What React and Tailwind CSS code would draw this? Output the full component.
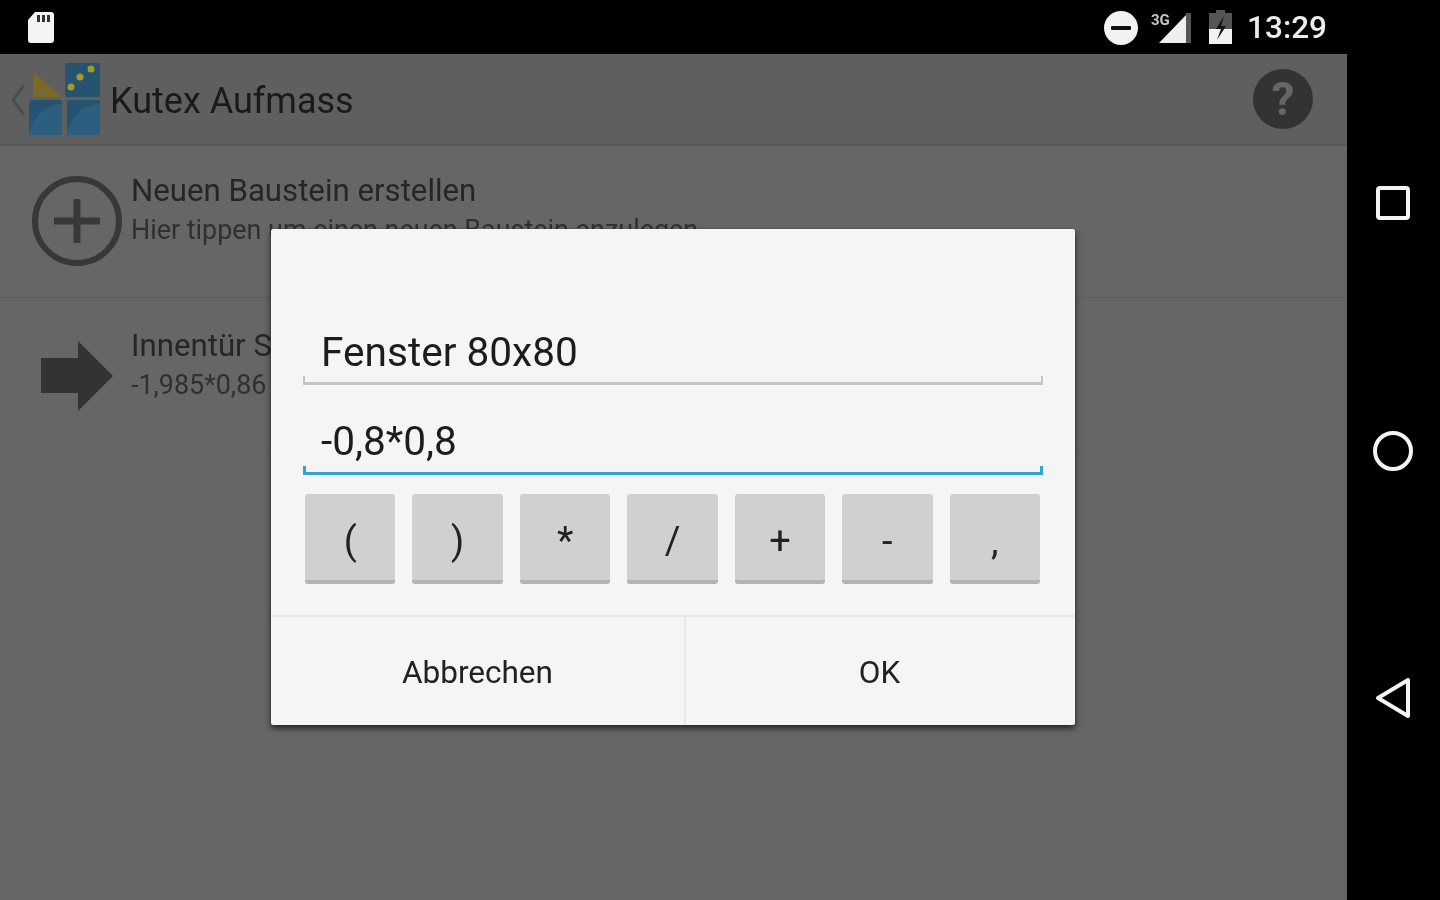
import React from 'react'

const font = { fontFamily: 'Roboto, sans-serif' }

const keys = ['(', ')', '*', '/', '+', '-', ',']

const StatusBar = () => (
  <div className="h-[54px] bg-black flex items-center shrink-0 text-white">
    <svg width="30" height="34" viewBox="0 0 30 34" className="ml-[26px] -mt-[1px]">
      <path d="M9 2h16a3 3 0 0 1 3 3v25a3 3 0 0 1-3 3H5a3 3 0 0 1-3-3V10z" fill="#f4f4f4" />
      <rect x="11" y="5" width="3" height="7" fill="#333" />
      <rect x="16" y="5" width="3" height="7" fill="#333" />
      <rect x="21" y="5" width="3" height="7" fill="#333" />
    </svg>
    <div className="flex items-center ml-auto mr-[113px] pt-[2px]">
      <svg width="36" height="36" viewBox="0 0 36 36">
        <circle cx="18" cy="18" r="17" fill="#f2f2f2" />
        <rect x="8" y="16" width="20" height="4" rx="1" fill="#111" />
      </svg>
      <svg width="44" height="36" viewBox="0 0 44 36" className="ml-[10px]">
        <path d="M10 33 L37 5 V33 Z" fill="#eeeeee" />
        <rect x="37" y="3" width="5" height="30" fill="#555" />
        <text x="2" y="15" fontSize="15" fontWeight="700" fill="#c8c8c8" style={font}>3G</text>
      </svg>
      <svg width="26" height="36" viewBox="0 0 26 36" className="ml-[15px]">
        <path d="M8 0h9v3h7v16H1V3h7z" fill="#555" />
        <path d="M1 19h23v15H1z" fill="#f2f2f2" />
        <path d="M16 6 L8 19 h5 l-4 11 L18 16 h-5 z" fill="#111" />
      </svg>
      <span className="ml-[13px] text-[31.5px] font-medium leading-none text-[#ececec]" style={font}>13:29</span>
    </div>
  </div>
)

const Header = () => (
  <div className="h-[92px] bg-[#5f5f5f] border-b-2 border-[#565656] flex items-center shrink-0">
    <svg width="90" height="74" viewBox="0 0 90 74" className="ml-[10px] mt-[2px]">
      <path d="M14 22 L3 37 L14 52" fill="none" stroke="#4d4d4d" strokeWidth="3" />
      <path d="M24 10 L52 34 H23 Z" fill="#7c6a24" />
      <path d="M30 24 L36 31 H29 Z" fill="#6a6a58" />
      <rect x="19" y="37" width="33" height="35" rx="2" fill="#26536f" />
      <rect x="57" y="37" width="33" height="35" rx="2" fill="#26536f" />
      <rect x="55" y="0" width="35" height="34" rx="2" fill="#26536f" />
      <path d="M19 68 C26 50 38 42 52 41 V72 H19 Z" fill="#2c5f7f" />
      <path d="M57 68 C64 50 76 42 90 41 V72 H57 Z" fill="#2c5f7f" />
      <circle cx="61" cy="24" r="3.5" fill="#a59a22" />
      <circle cx="70" cy="14" r="3.5" fill="#a59a22" />
      <circle cx="81" cy="6" r="3.5" fill="#a59a22" />
    </svg>
    <span className="ml-[10px] mt-[4px] text-[36px] leading-none text-[#1a1a1a]" style={font}>Kutex Aufmass</span>
    <div className="ml-auto mr-[34px] w-[60px] h-[60px] rounded-full bg-[#333333] flex items-center justify-center text-[#666666] text-[46px] font-bold leading-none" style={font}>?</div>
  </div>
)

const Row = ({ icon, title, sub, height, titleTop }) => (
  <div className={`${height} flex border-b border-[#5f5f5f] shrink-0`}>
    <div className="w-[92px] ml-[31px] mr-[8px] -mt-[2px] flex items-center justify-center shrink-0">{icon}</div>
    <div className="flex flex-col whitespace-nowrap" style={font}>
      <span className={`text-[31.2px] leading-[34px] text-[#262626] ${titleTop}`}>{title}</span>
      <span className="text-[26.9px] leading-[34px] text-[#303030] mt-[5px]">{sub}</span>
    </div>
  </div>
)

const Dialog = () => (
  <div className="absolute left-[271px] top-[229px] w-[804px] h-[496px] bg-[#f5f5f5] rounded-[2px] shadow-[0_3px_6px_rgba(0,0,0,0.7)] flex flex-col" style={font}>
    <div className="px-[32px] pt-[88px]">
      <div className="relative h-[68px] border-b-[3px] border-[#c4c4c4] px-[18px] pt-[6px] flex items-center text-[40.6px] leading-none text-[#1c1c1c] before:absolute before:left-0 before:bottom-0 before:w-[2px] before:h-[6px] before:bg-[#c4c4c4] after:absolute after:right-0 after:bottom-0 after:w-[2px] after:h-[6px] after:bg-[#c4c4c4]">Fenster 80x80</div>
      <div className="relative h-[90px] border-b-[3px] border-[#33a3d3] px-[18px] pt-[26px] flex items-center text-[40.6px] leading-none text-[#1c1c1c] before:absolute before:left-0 before:bottom-0 before:w-[3px] before:h-[6px] before:bg-[#33a3d3] after:absolute after:right-0 after:bottom-0 after:w-[3px] after:h-[6px] after:bg-[#33a3d3]">-0,8*0,8</div>
    </div>
    <div className="grid grid-cols-7 gap-x-[17px] pl-[34px] pr-[35px] pt-[19px]">
      {keys.map((k) => (
        <div key={k} className="h-[90px] bg-[#d0d0d0] border-b-[4px] border-[#b4b4b4] rounded-[3px] pt-[8px] flex items-center justify-center text-[38px] leading-none text-[#222222]">{k}</div>
      ))}
    </div>
    <div className="mt-auto h-[110px] border-t-2 border-[#e8e8e8] flex text-[31.5px] leading-none text-[#222222]">
      <div className="w-[415px] border-r-2 border-[#e8e8e8] pt-[3px] flex items-center justify-center">Abbrechen</div>
      <div className="flex-1 pt-[3px] pr-[2px] flex items-center justify-center">OK</div>
    </div>
  </div>
)

const NavBar = () => (
  <div className="w-[93px] bg-black flex flex-col items-center pt-[131px] pr-[2px] shrink-0">
    <svg width="36" height="36" viewBox="0 0 36 36">
      <rect x="3" y="3" width="30" height="30" rx="2" fill="none" stroke="#f4f4f4" strokeWidth="4" />
    </svg>
    <svg width="44" height="44" viewBox="0 0 44 44" className="mt-[208px]">
      <circle cx="22" cy="22" r="18" fill="none" stroke="#f4f4f4" strokeWidth="4" />
    </svg>
    <svg width="38" height="42" viewBox="0 0 38 42" className="mt-[204px]">
      <path d="M34 3 V39 L4 21 Z" fill="none" stroke="#f4f4f4" strokeWidth="4" strokeLinejoin="round" />
    </svg>
  </div>
)

export default function App() {
  return (
    <div className="relative w-[1440px] h-[900px] overflow-hidden bg-black flex flex-col blur-[0.6px]">
      <StatusBar />
      <div className="flex flex-1">
        <div className="w-[1347px] bg-[#666666] flex flex-col">
          <Header />
          <Row
            height="h-[152px]"
            titleTop="mt-[28px]"
            title="Neuen Baustein erstellen"
            sub="Hier tippen um einen neuen Baustein anzulegen"
            icon={
              <svg width="92" height="92" viewBox="0 0 92 92">
                <circle cx="46" cy="46" r="42" fill="none" stroke="#383838" strokeWidth="6" />
                <path d="M46 24 V68 M23 46 H69" stroke="#383838" strokeWidth="7" fill="none" />
              </svg>
            }
          />
          <Row
            height="h-[156px]"
            titleTop="mt-[31px]"
            title="Innentür Standard"
            sub="-1,985*0,86"
            icon={
              <svg width="72" height="70" viewBox="0 0 72 70" className="mt-[2px]">
                <path d="M0 17 H37 V0 L72 35 L37 70 V52 H0 Z" fill="#333333" />
              </svg>
            }
          />
        </div>
        <NavBar />
      </div>
      <Dialog />
    </div>
  )
}
